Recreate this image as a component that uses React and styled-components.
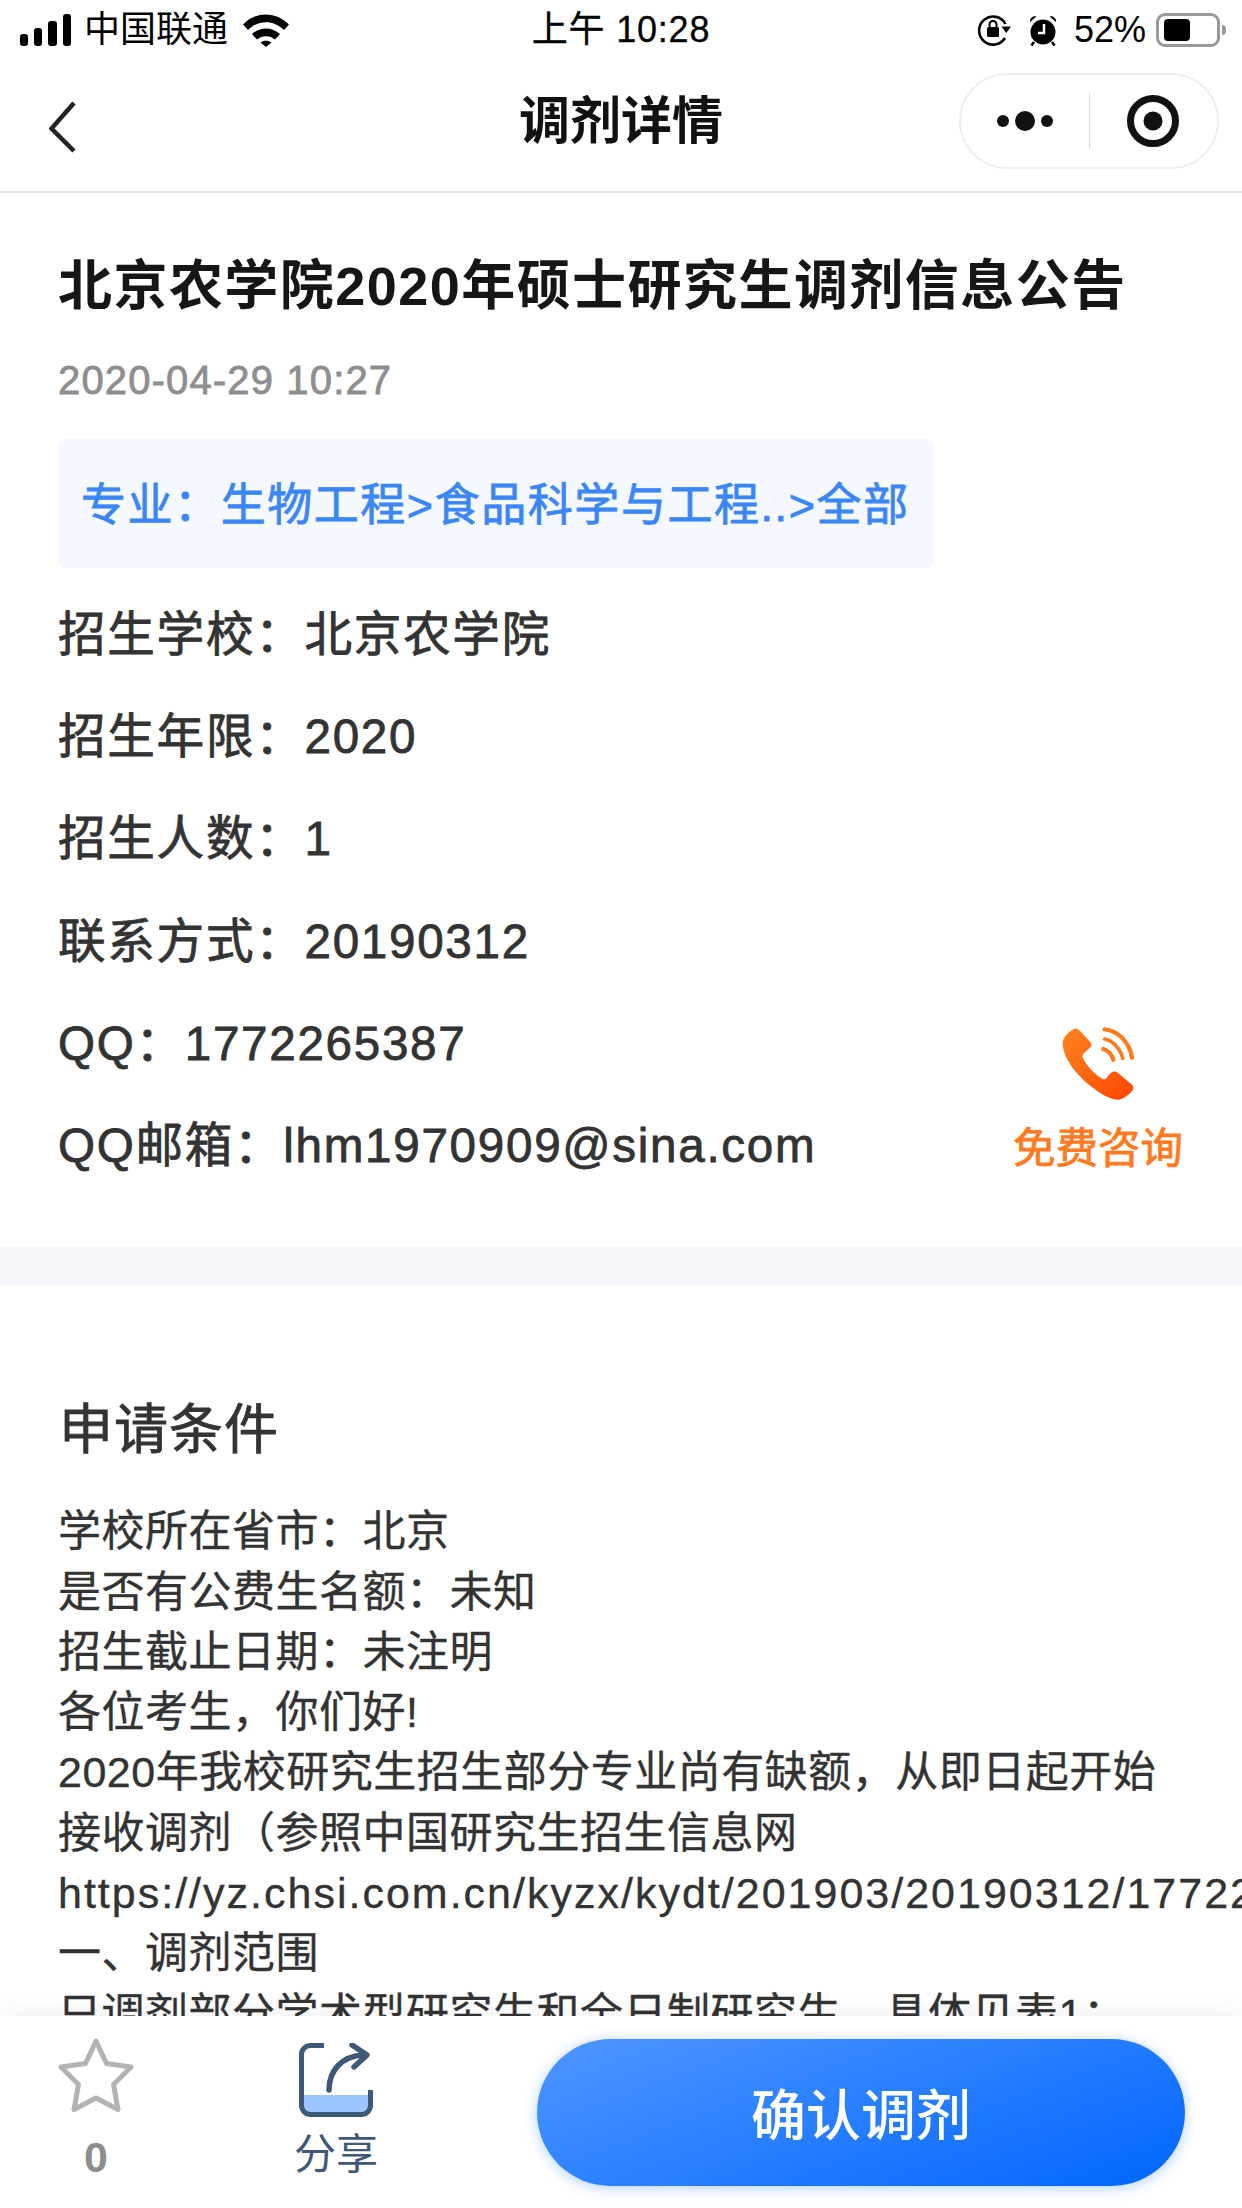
import React from "react";
import styled, { createGlobalStyle, css } from "styled-components";

const FONT = `"Liberation Sans", "Noto Sans CJK SC", sans-serif`;

const medium = css`
  font-weight: 400;
  -webkit-text-stroke: 0.8px currentColor;
`;

const Global = createGlobalStyle`
  html, body { margin: 0; padding: 0; background: #fff; }
  body { font-family: ${FONT}; }
  * { box-sizing: border-box; }
`;

const Screen = styled.div`
  position: relative;
  width: 1242px;
  height: 2208px;
  overflow: hidden;
  background: #fff;
  color: #333;
`;

const StatusBar = styled.div`
  height: 60px;
  padding: 0 20px;
  display: grid;
  grid-template-columns: minmax(0, 1fr) auto minmax(0, 1fr);
  align-items: center;
  color: #000;
  font-size: 36px;
`;
const StatusLeft = styled.div`
  display: flex;
  align-items: center;
`;
const Carrier = styled.span`
  margin: 0 15px 0 13px;
  line-height: 40px;
`;
const Clock = styled.span`
  letter-spacing: 0.8px;
  line-height: 40px;
  -webkit-text-stroke: 0.3px currentColor;
`;
const StatusRight = styled.div`
  display: flex;
  align-items: center;
  justify-content: flex-end;
  padding-right: 2px;
`;
const AlarmSlot = styled.span`
  display: flex;
  margin: 0 17px 0 17px;
`;
const Percent = styled.span`
  line-height: 40px;
  margin-right: 10px;
`;
const Battery = styled.span`
  position: relative;
  width: 64px;
  height: 34px;
  border: 3px solid #999;
  border-radius: 9px;
  padding: 3px 5px;
  display: block;
  &::after {
    content: "";
    position: absolute;
    right: -9px;
    top: 9px;
    width: 4px;
    height: 10px;
    background: #999;
    border-radius: 0 4px 4px 0;
  }
`;
const BatteryFill = styled.span`
  display: block;
  width: 54%;
  height: 100%;
  background: #000;
  border-radius: 4px;
`;

const NavBar = styled.div`
  height: 133px;
  border-bottom: 2px solid #e5e5e5;
  display: grid;
  grid-template-columns: minmax(0, 1fr) auto minmax(0, 1fr);
  align-items: center;
  padding: 0 23px 10px 23px;
`;
const Back = styled.div`
  display: flex;
  margin: 13px 0 0 26px;
`;
const NavTitle = styled.div`
  font-size: 51px;
  font-weight: 700;
  color: #111;
  line-height: 64px;
  padding-top: 2px;
`;
const Capsule = styled.div`
  justify-self: end;
  width: 260px;
  height: 96px;
  border: 2px solid #eeeeee;
  border-radius: 48px;
  display: grid;
  grid-template-columns: 1fr 1px 1fr;
  align-items: center;
  justify-items: center;
`;
const CapsuleDivider = styled.span`
  width: 1px;
  height: 55px;
  background: #d9d9d9;
`;

const Intro = styled.section`
  padding: 58px 58px 50px;
`;
const ArticleTitle = styled.h1`
  margin: 0;
  font-size: 54px;
  letter-spacing: 1.45px;
  line-height: 70px;
  font-weight: 700;
  color: #161616;
  white-space: nowrap;
`;
const DateLine = styled.div`
  ${medium}
  margin-top: 34px;
  font-size: 40px;
  line-height: 50px;
  letter-spacing: 1.15px;
  color: #8e8e8e;
`;
const Tag = styled.div`
  ${medium}
  margin-top: 34px;
  width: 876px;
  height: 129px;
  padding: 0 0 4px 23px;
  display: flex;
  align-items: center;
  background: #f5f8ff;
  border-radius: 8px;
  color: #3b86f6;
  font-size: 45px;
  letter-spacing: 1.55px;
  white-space: nowrap;
`;
const Facts = styled.div`
  margin-top: 16px;
`;
const Fact = styled.div`
  ${medium}
  font-size: 47.6px;
  line-height: 102.2px;
  letter-spacing: 1.7px;
  color: #333;
  white-space: nowrap;
`;

const SectionGap = styled.div`
  height: 38px;
  background: #f6f6fa;
`;

const Details = styled.section`
  padding: 110px 0 0 58px;
`;
const DetailsTitle = styled.h2`
  ${medium}
  margin: 0 0 36px 1px;
  font-size: 54px;
  letter-spacing: 1px;
  line-height: 70px;
  color: #333;
`;
const BodyText = styled.div`
  -webkit-text-stroke: 0.35px currentColor;
  font-size: 43px;
  letter-spacing: 0.5px;
  line-height: 60.3px;
  color: #333;
  white-space: nowrap;
`;
const BodyLine = styled.div`
  letter-spacing: ${(p) => (p.$url ? "2px" : "inherit")};
`;

const Consult = styled.div`
  position: absolute;
  left: 1012px;
  top: 1027px;
  width: 172px;
  display: flex;
  flex-direction: column;
  align-items: center;
  gap: 23px;
`;
const ConsultLabel = styled.span`
  ${medium}
  font-size: 42.5px;
  line-height: 50px;
  color: #ff7a1f;
  white-space: nowrap;
`;

const BottomBar = styled.div`
  position: absolute;
  left: 0;
  right: 0;
  top: 2016px;
  height: 192px;
  background: #fff;
  box-shadow: 0 -6px 22px rgba(0, 0, 0, 0.05);
  display: flex;
  align-items: flex-start;
  padding: 22px 57px 0 58px;
`;
const Star = styled.div`
  width: 76px;
  display: flex;
  flex-direction: column;
  align-items: center;
`;
const Count = styled.span`
  margin-top: 20px;
  font-size: 43px;
  line-height: 46px;
  font-weight: 700;
  color: #8c8c8c;
`;
const Share = styled.div`
  margin-left: 160px;
  width: 84px;
  padding-top: 5px;
  display: flex;
  flex-direction: column;
  align-items: center;
`;
const ShareLabel = styled.span`
  margin-top: 13px;
  font-size: 42px;
  line-height: 50px;
  color: #3f5878;
  white-space: nowrap;
`;
const ConfirmButton = styled.button`
  margin-left: auto;
  width: 648px;
  height: 147px;
  margin-top: 1px;
  padding-bottom: 4px;
  border: 0;
  border-radius: 74px;
  background: linear-gradient(160deg, #4f96ff 0%, #0066ff 100%);
  box-shadow: 0 2px 14px rgba(0, 102, 255, 0.3);
  color: #fff;
  font-family: ${FONT};
  font-size: 55px;
  font-weight: 500;
`;

const Signal = () => (
  <svg width="51" height="32" viewBox="0 0 51 32">
    <rect x="0" y="20" width="8" height="12" rx="3" />
    <rect x="14" y="14" width="8" height="18" rx="3" />
    <rect x="28" y="7" width="9" height="25" rx="3" />
    <rect x="43" y="0" width="8" height="32" rx="3" />
  </svg>
);
const Wifi = () => (
  <svg width="46" height="33" viewBox="0 0 46 33">
    <path d="M0 10.500C13 -3 33 -3 46 10.500L41 16C30.500 5.500 15.500 5.500 5 16Z" />
    <path d="M9 20C17 12.500 29 12.500 37 20L32 25.500C27 21 19 21 14 25.500Z" />
    <path d="M17.500 28.500C20.500 26 25.500 26 28.500 28.500L23 33Z" />
  </svg>
);
const RotateLock = () => (
  <svg width="34" height="32" viewBox="0 0 34 32">
    <path d="M27 24A14 14 0 1 1 27.500 10" fill="none" stroke="#000" strokeWidth="2.600" />
    <path d="M23.500 12.500H33L28.200 19Z" />
    <rect x="9" y="13" width="12" height="10" rx="1.500" />
    <path d="M11.500 13V10.500A3.500 3.500 0 0 1 18.500 10.500V13" fill="none" stroke="#000" strokeWidth="2" />
  </svg>
);
const Alarm = () => (
  <svg width="28" height="31" viewBox="0 0 28 31">
    <circle cx="14" cy="17" r="12.500" />
    <path d="M1 7A5 5 0 0 1 7.500 1.500ZM27 7A5 5 0 0 0 20.500 1.500Z" />
    <path d="M5 27L2.500 30.500M23 27L25.500 30.500" stroke="#000" strokeWidth="2.500" />
    <path d="M15 9V18H9" fill="none" stroke="#fff" strokeWidth="2.500" />
  </svg>
);
const Chevron = () => (
  <svg width="27" height="52" viewBox="0 0 27 52">
    <path d="M25 2L2.500 27.500L25 50" fill="none" stroke="#222" strokeWidth="4.500" />
  </svg>
);
const Dots = () => (
  <svg width="56" height="24" viewBox="0 0 56 24">
    <circle cx="6" cy="12" r="6" fill="#111" />
    <circle cx="28" cy="12" r="10" fill="#111" />
    <circle cx="50" cy="12" r="6" fill="#111" />
  </svg>
);
const Target = () => (
  <svg width="54" height="54" viewBox="0 0 54 54">
    <circle cx="27" cy="27" r="22.500" fill="none" stroke="#111" strokeWidth="7" />
    <circle cx="27" cy="27" r="9.500" fill="#111" />
  </svg>
);
const PhoneIcon = () => (
  <svg width="73" height="74" viewBox="0 0 219 222">
    <defs>
      <linearGradient id="phoneFill" x1="0" y1="0" x2="1" y2="1">
        <stop offset="0" stopColor="#ff8420" />
        <stop offset="1" stopColor="#ff4500" />
      </linearGradient>
    </defs>
    <path
      d="M2 44C6 28 22 12 36 6C44 3 48 6 54 12L84 44C90 50 90 56 84 62L66 78C60 84 60 90 64 96C76 118 96 140 118 154C124 158 130 158 134 152L146 138C152 132 160 132 166 136L208 172C216 178 216 186 210 192C198 206 184 216 170 218C152 220 118 204 82 174C44 142 0 92 2 44Z"
      fill="url(#phoneFill)"
    />
    <g fill="none" stroke="#ff7a1c" strokeWidth="13" strokeLinecap="round">
      <path d="M128 7C170 10 204 50 210 92" />
      <path d="M124 66C138 70 150 84 154 98" />
      <path d="M128 36C152 40 176 66 182 94" strokeWidth="11" />
    </g>
  </svg>
);
const StarIcon = () => (
  <svg width="76" height="76" viewBox="0 0 76 76">
    <path
      d="M38 3L48.500 25.500L73 29L55.500 46.500L60 71.500L38 60L16 71.500L20.500 46.500L3 29L27.500 25.500Z"
      fill="none"
      stroke="#b3b3b3"
      strokeWidth="5"
      strokeLinejoin="round"
    />
  </svg>
);
const ShareIcon = () => (
  <svg width="74" height="74" viewBox="0 0 74 74">
    <path d="M3 52H71V62A9 9 0 0 1 62 71H12A9 9 0 0 1 3 62Z" fill="#9cc4ff" />
    <path
      d="M25 2.500H12A9 9 0 0 0 2.500 12V62A9 9 0 0 0 12 71.500H62A9 9 0 0 0 71.500 62V47"
      fill="none"
      stroke="#3f5878"
      strokeWidth="5"
    />
    <path
      d="M30 47C30 28 42 13 65 12M53 2L68 12L55 24"
      fill="none"
      stroke="#3f5878"
      strokeWidth="5.500"
      strokeLinecap="round"
      strokeLinejoin="round"
    />
  </svg>
);

const facts = [
  "招生学校：北京农学院",
  "招生年限：2020",
  "招生人数：1",
  "联系方式：20190312",
  "QQ：1772265387",
  "QQ邮箱：lhm1970909@sina.com",
];
const bodyLines = [
  "学校所在省市：北京",
  "是否有公费生名额：未知",
  "招生截止日期：未注明",
  "各位考生，你们好!",
  "2020年我校研究生招生部分专业尚有缺额，从即日起开始",
  "接收调剂（参照中国研究生招生信息网",
  "https://yz.chsi.com.cn/kyzx/kydt/201903/20190312/17722",
  "一、调剂范围",
  "只调剂部分学术型研究生和全日制研究生，具体见表1：",
];

export default function App() {
  return (
    <Screen>
      <Global />
      <StatusBar>
        <StatusLeft>
          <Signal />
          <Carrier>中国联通</Carrier>
          <Wifi />
        </StatusLeft>
        <Clock>上午 10:28</Clock>
        <StatusRight>
          <RotateLock />
          <AlarmSlot><Alarm /></AlarmSlot>
          <Percent>52%</Percent>
          <Battery><BatteryFill /></Battery>
        </StatusRight>
      </StatusBar>
      <NavBar>
        <Back><Chevron /></Back>
        <NavTitle>调剂详情</NavTitle>
        <Capsule>
          <Dots />
          <CapsuleDivider />
          <Target />
        </Capsule>
      </NavBar>
      <Intro>
        <ArticleTitle>北京农学院2020年硕士研究生调剂信息公告</ArticleTitle>
        <DateLine>2020-04-29 10:27</DateLine>
        <Tag>专业：生物工程&gt;食品科学与工程..&gt;全部</Tag>
        <Facts>
          {facts.map((f) => <Fact key={f}>{f}</Fact>)}
        </Facts>
      </Intro>
      <SectionGap />
      <Details>
        <DetailsTitle>申请条件</DetailsTitle>
        <BodyText>
          {bodyLines.map((l) => (
            <BodyLine key={l} $url={l.startsWith("http")}>{l}</BodyLine>
          ))}
        </BodyText>
      </Details>
      <Consult>
        <PhoneIcon />
        <ConsultLabel>免费咨询</ConsultLabel>
      </Consult>
      <BottomBar>
        <Star>
          <StarIcon />
          <Count>0</Count>
        </Star>
        <Share>
          <ShareIcon />
          <ShareLabel>分享</ShareLabel>
        </Share>
        <ConfirmButton>确认调剂</ConfirmButton>
      </BottomBar>
    </Screen>
  );
}
